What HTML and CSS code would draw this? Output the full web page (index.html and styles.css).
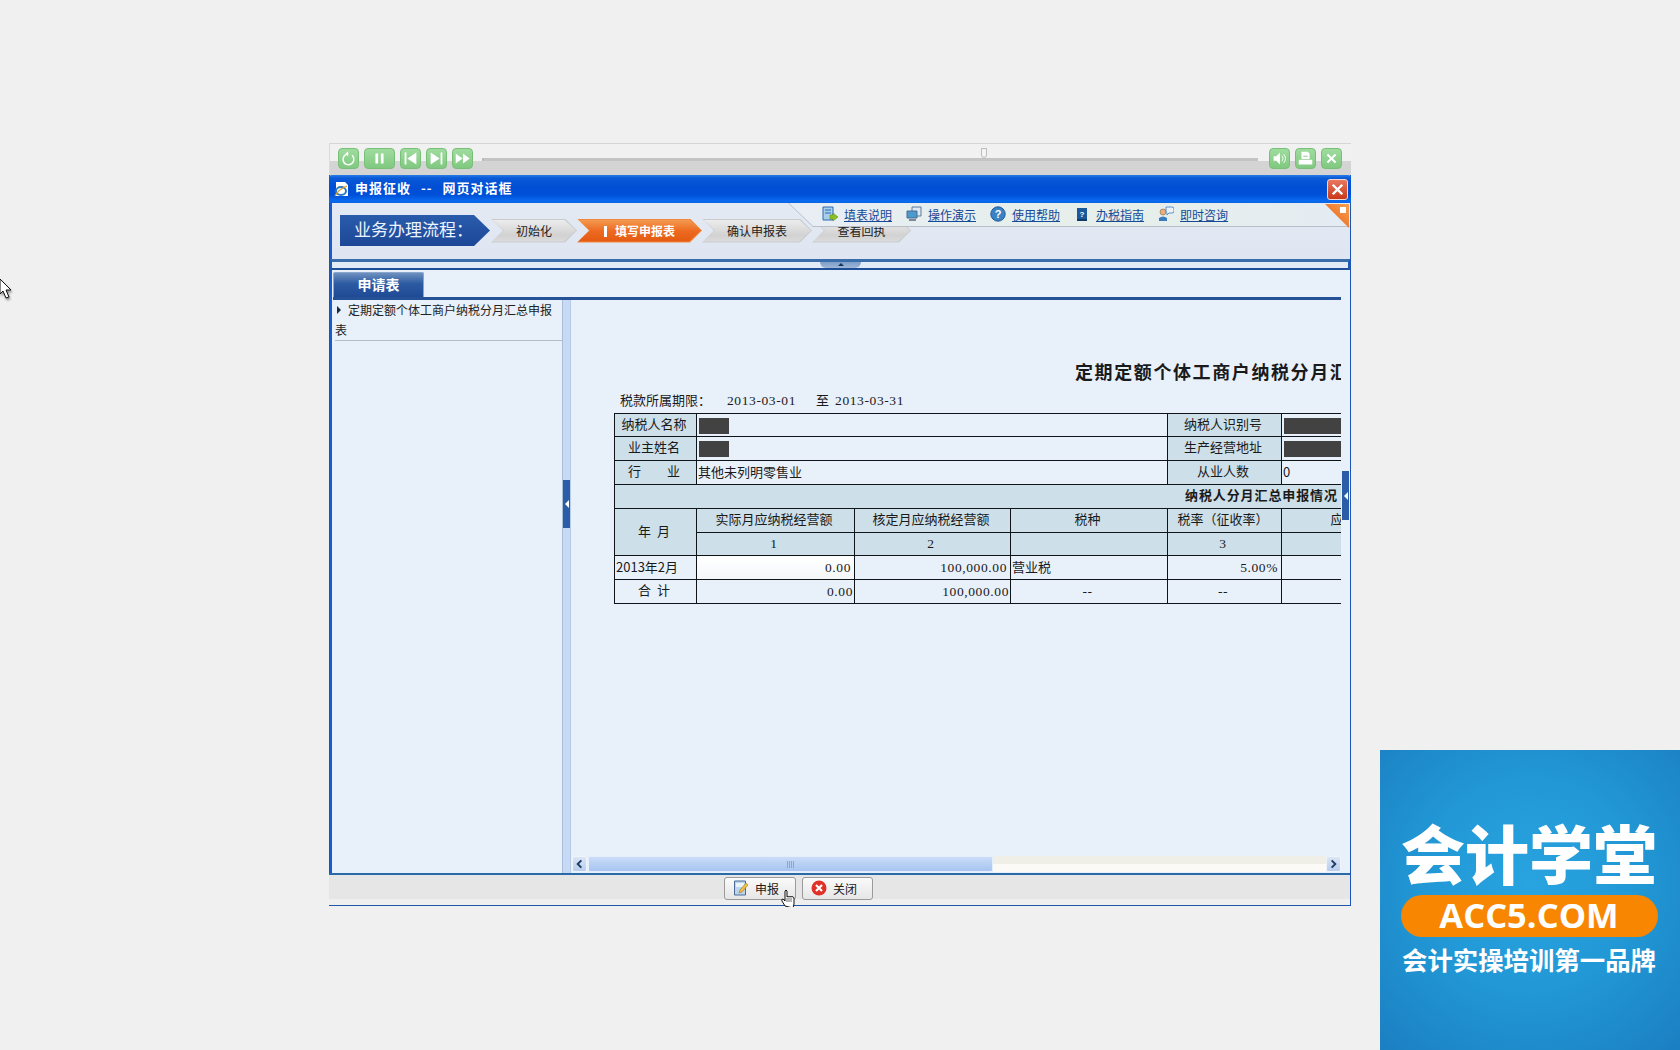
FILE: index.html
```html
<!DOCTYPE html>
<html lang="zh">
<head>
<meta charset="utf-8">
<title>申报征收</title>
<link rel="stylesheet" href="styles.css">
</head>
<body>
<div class="app">
  <div class="player">
    <div class="track-zone">
      <button class="pbtn"><svg viewBox="0 0 21 21"><path d="M14.5 7a6 6 0 1 1-4-1.6" fill="none" stroke="#fff" stroke-width="1.6"/><path d="M10 2.5v5.5l-3-2.7z" fill="#fff"/></svg></button>
      <button class="pbtn wide"><svg viewBox="0 0 31 21"><path d="M11 5h3v11h-3zM17 5h3v11h-3z" fill="#fff"/></svg></button>
      <button class="pbtn"><svg viewBox="0 0 21 21"><path d="M4 4h2v13H4zM17 4v13L7 10.500z" fill="#fff"/></svg></button>
      <button class="pbtn"><svg viewBox="0 0 21 21"><path d="M17 4h-2v13h2zM4 4v13l10-6.500z" fill="#fff"/></svg></button>
      <button class="pbtn"><svg viewBox="0 0 21 21"><path d="M3 5v11l7.500-5.500zM11 5v11l7.500-5.500z" fill="#fff"/></svg></button>
      <div class="slider"><span class="knob"></span></div>
      <button class="pbtn"><svg viewBox="0 0 21 21"><path d="M4 8h3l4-4v13l-4-4H4z" fill="#fff"/><path d="M13 7.500a4 4 0 0 1 0 6M15 5.500a7 7 0 0 1 0 10" fill="none" stroke="#fff"/></svg></button>
      <button class="pbtn"><svg viewBox="0 0 21 21"><path d="M6 3h7l2 2v6H6zM3 12h15v5H3z" fill="#fff"/><path d="M8 8h5" stroke="#88c888"/></svg></button>
      <button class="pbtn"><svg viewBox="0 0 21 21"><path d="M6 6l9 9M15 6l-9 9" stroke="#fff" stroke-width="2.200"/></svg></button>
    </div>
  </div>

  <div class="dialog">
    <div class="titlebar">
      <svg class="ie" viewBox="0 0 16 16"><path d="M2 1h9l3 3v11H2z" fill="#fff"/><ellipse cx="7" cy="10" rx="5" ry="4" fill="none" stroke="#2a78c8" stroke-width="2"/><path d="M1 15C3 11 8 7 13 5" fill="none" stroke="#d8a020" stroke-width="1.300"/></svg>
      <span class="title-text">申报征收 -- 网页对话框</span>
      <button class="closex"><svg viewBox="0 0 20 20"><path d="M5 5l10 10M15 5L5 15" stroke="#fff" stroke-width="2.600"/></svg></button>
    </div>

    <div class="head">
      <div class="steps">
        <div class="flow-label">业务办理流程：</div>
        <div class="step s1"><span>初始化</span></div>
        <div class="step s2 active"><span><i class="bar"></i>填写申报表</span></div>
        <div class="step s3"><span>确认申报表</span></div>
        <div class="step s4"><span>查看回执</span></div>
      </div>
      <div class="linkbar">
        <a class="link"><svg viewBox="0 0 16 16"><path d="M1 1h10v13H1z" fill="#a9cdea" stroke="#2a6cae"/><path d="M3 4h6M3 7h6" stroke="#2a6cae"/><path d="M8 9h3V7l5 4-5 4v-2H8z" fill="#8cc020" stroke="#5a8a10" stroke-width=".5"/></svg><span>填表说明</span></a>
        <a class="link"><svg viewBox="0 0 16 16"><path d="M6 1h9v9H6z" fill="#dfe8f0" stroke="#5a7a9a"/><path d="M1 5h10v7H1z" fill="#4a9ad0" stroke="#4a6a8a"/><path d="M3 14h7" stroke="#7a8a9a" stroke-width="2"/></svg><span>操作演示</span></a>
        <a class="link"><svg viewBox="0 0 16 16"><circle cx="8" cy="8" r="7.200" fill="#3a82c4" stroke="#1f5a9a"/><text x="8" y="12" class="qmark">?</text></svg><span>使用帮助</span></a>
        <a class="link"><svg viewBox="0 0 16 16"><path d="M3 2h10v12H3z" fill="#1a5a9a"/><path d="M3 13h10v2H3z" fill="#0e3a70"/><text x="8" y="11" class="qsmall">?</text></svg><span>办税指南</span></a>
        <a class="link"><svg viewBox="0 0 16 16"><circle cx="5" cy="6" r="3" fill="#e8b080" stroke="#8a6a40" stroke-width=".6"/><path d="M1 15v-3q4-3 8 0v3z" fill="#3a7ac0"/><path d="M8 1h6a2 2 0 0 1 2 2v2a2 2 0 0 1-2 2h-3l-2 2V7a3 3 0 0 1-1-2z" fill="#eaf2fa" stroke="#3a7ac0" stroke-width=".8"/></svg><span>即时咨询</span></a>
      </div>
      <div class="corner"><i></i></div>
    </div>

    <div class="hsplit"><div class="handle"><i></i></div></div>

    <div class="body">
      <div class="work">
        <div class="tabs"><div class="tab">申请表</div></div>
        <div class="panes">
          <div class="side">
            <div class="side-item"><i class="tri"></i>定期定额个体工商户纳税分月汇总申报表</div>
          </div>
          <div class="vsplit"><div class="collapse"><i></i></div></div>
          <div class="main">
            <div class="viewport">
              <h1 class="doc-title">定期定额个体工商户纳税分月汇总申报表</h1>
              <div class="period">
                <span>税款所属期限：</span>
                <span class="num d1">2013-03-01</span>
                <span class="to">至</span>
                <span class="num d2">2013-03-31</span>
              </div>
              <table class="form">
                <colgroup><col class="c1"><col class="c2"><col class="c3"><col class="c4"><col class="c5"><col class="c6"></colgroup>
                <tr class="h23">
                  <td class="lb">纳税人名称</td><td colspan="3"><span class="mask m30"></span></td>
                  <td class="lb">纳税人识别号</td><td><span class="mask m60"></span></td>
                </tr>
                <tr>
                  <td class="lb">业主姓名</td><td colspan="3"><span class="mask m30"></span></td>
                  <td class="lb">生产经营地址</td><td><span class="mask m60"></span></td>
                </tr>
                <tr>
                  <td class="lb">行&emsp;&emsp;业</td><td colspan="3" class="l">其他未列明零售业</td>
                  <td class="lb">从业人数</td><td class="l">0</td>
                </tr>
                <tr><td colspan="6" class="lb sec">纳税人分月汇总申报情况</td></tr>
                <tr>
                  <td rowspan="2" class="lb">年&nbsp;&nbsp;月</td>
                  <td class="lb">实际月应纳税经营额</td><td class="lb">核定月应纳税经营额</td><td class="lb">税种</td><td class="lb">税率（征收率）</td><td class="lb">应</td>
                </tr>
                <tr class="h23">
                  <td class="lb num">1</td><td class="lb num">2</td><td class="lb"></td><td class="lb num">3</td><td class="lb"></td>
                </tr>
                <tr>
                  <td class="l">2013年2月</td><td class="r num input">0.00</td><td class="r num">100,000.00</td><td class="l">营业税</td><td class="r num">5.00%</td><td></td>
                </tr>
                <tr>
                  <td>合&nbsp;&nbsp;计</td><td class="r2 num">0.00</td><td class="r2 num">100,000.00</td><td class="num">--</td><td class="num">--</td><td></td>
                </tr>
              </table>
            </div>
            <div class="hscroll">
              <div class="sb-btn"><svg viewBox="0 0 14 14"><path d="M9 3L5 7l4 4" fill="none" stroke="#1a3a66" stroke-width="2"/></svg></div>
              <div class="sb-thumb"><i></i></div>
              <div class="sb-track"></div>
              <div class="sb-btn"><svg viewBox="0 0 14 14"><path d="M5 3l4 4-4 4" fill="none" stroke="#1a3a66" stroke-width="2"/></svg></div>
            </div>
          </div>
        </div>
      </div>
      <div class="rstrip"><div class="rcollapse"><i></i></div></div>
    </div>

    <div class="foot">
      <button class="fbtn"><svg viewBox="0 0 16 16"><path d="M1.500 1h11v14h-11z" fill="#bcd4ee" stroke="#4a6a9a"/><path d="M3 3h8v4H3z" fill="#eaf2fa"/><path d="M6 13l1-3 6-7 2 2-6 7z" fill="#f0c040" stroke="#a07820" stroke-width=".6"/></svg><span>申报</span></button>
      <button class="fbtn"><svg viewBox="0 0 16 16"><circle cx="8" cy="8" r="7.500" fill="#e03028"/><path d="M5 5l6 6M11 5l-6 6" stroke="#fff" stroke-width="2.200"/></svg><span>关闭</span></button>
    </div>
  </div>
</div>

<svg class="cur-arrow" viewBox="0 0 14 24"><path d="M0 1l11 11H6l3 7-3 1-3-7-3 3z" fill="#fff" stroke="#111"/></svg>
<svg class="cur-hand" viewBox="0 0 16 18"><path d="M5 17l-3-5q-1-2 1-2l2 2V2q1-2 2 0v6q1-1 2 0 1-1 2 0 1-1 2 0 1 0 1 2v5l-1 4z" fill="#fff" stroke="#111"/><path d="M7 9v4M9 9v4M11 9v4" stroke="#111" stroke-width=".6"/></svg>

<aside class="logo">
  <div class="logo-name">会计学堂</div>
  <div class="logo-pill">ACC5.COM</div>
  <div class="logo-tag">会计实操培训第一品牌</div>
</aside>
</body>
</html>
```

FILE: styles.css
```css
* { box-sizing: border-box; }
html, body { height: 100%; }
body {
  margin: 0;
  padding: 143px 0 0 329px;
  background: #f0f0f0;
  overflow: hidden;
  font-family: "Noto Sans CJK SC", "Liberation Sans", sans-serif;
  font-size: 13px;
  color: #1a1a1a;
}
button { padding: 0; font: inherit; cursor: pointer; }
.app { width: 1022px; }

/* media player bar */
.player {
  height: 32px;
  background: linear-gradient(#f1f1f1 0, #f1f1f1 17px, #d4d4d4 17px, #d4d4d4 100%);
  border-top: 1px solid #d6d6d6;
  border-left: 1px solid #dcdcdc;
}
.track-zone { display: flex; align-items: flex-start; padding: 4px 9px 0 8px; gap: 5px; }
.pbtn {
  width: 21px; height: 21px; flex: none;
  border: 1px solid #78c078; border-radius: 4px;
  background: linear-gradient(#9fdc9f, #80c880);
  display: block;
}
.pbtn svg { display: block; width: 100%; height: 100%; }
.pbtn.wide { width: 31px; }
.slider { flex: 1; height: 3px; margin: 10px 6px 0 4px; background: #c4c4c4; position: relative; border-left: 2px solid #bbb; }
.knob { position: absolute; left: 497px; top: -10px; width: 6px; height: 10px; background: #f4f4f4; border: 1px solid #bbb; border-radius: 0 0 3px 3px; }

/* dialog */
.dialog {
  height: 731px;
  display: flex; flex-direction: column;
  border-left: 1px solid #1a54b8;
  border-right: 1px solid #1a54b8;
  border-bottom: 1px solid #1f56a8;
  background: #e8f0fa;
}
.titlebar {
  height: 28px; flex: none;
  margin: 0 -1px;
  display: flex; align-items: center;
  padding: 0 3px 0 5px;
  background: linear-gradient(#2a7ce8 0, #0a5ad8 3px, #004ed4 12px, #0050d8 20px, #0a6cf0 26px, #0a62e0 100%);
  border-radius: 3px 3px 0 0;
}
.ie { width: 16px; height: 16px; flex: none; }
.title-text { margin-left: 5px; margin-top: -3px; color: #fff; font-weight: 700; font-size: 13px; letter-spacing: 1px; flex: 1; white-space: pre; word-spacing: 6px; }
.closex { width: 21px; height: 21px; flex: none; border: 1px solid #f4d8d0; border-radius: 3px; background: linear-gradient(#e87860, #c83818); }
.closex svg { display: block; width: 100%; height: 100%; }

.head {
  height: 56px; flex: none; position: relative;
  background: linear-gradient(#e3eaf3, #dfe6f2);
  border-left: 2px solid #1a5cd0;
}
.steps { display: flex; align-items: center; padding: 12px 0 0 8px; height: 43px; }
.flow-label {
  width: 150px; height: 31px; flex: none;
  clip-path: polygon(0 0, 134px 0, 100% 50%, 134px 100%, 0 100%);
  background: linear-gradient(#2a5cac, #1c4796);
  color: #eef4ff; font-size: 17px; line-height: 28px; padding-left: 14px;
  white-space: nowrap; margin-right: 1px;
}
.step {
  height: 24px; flex: none; position: relative;
  display: flex; align-items: center; justify-content: center;
  clip-path: polygon(0 0, calc(100% - 12px) 0, 100% 50%, calc(100% - 12px) 100%, 0 100%, 12px 50%);
  background: #c9cbce;
  font-size: 12px; color: #222;
}
.step::before {
  content: ""; position: absolute; inset: 1px 1px;
  clip-path: polygon(0 0, calc(100% - 12px) 0, 100% 50%, calc(100% - 12px) 100%, 0 100%, 12px 50%);
  background: linear-gradient(#ececec, #d2d2d2 70%, #dcdcdc);
}
.step span { position: relative; margin-top: -1px; }
.s1 { width: 86px; }
.s2 { width: 125px; }
.s3 { width: 110px; }
.s4 { width: 99px; }
.step.active { background: #f08840; color: #fff; font-weight: 700; }
.step.active::before { background: linear-gradient(#f49a50, #ec6a20 50%, #e45a10); }
.bar { display: inline-block; width: 3px; height: 11px; background: #fff; margin-right: 8px; vertical-align: -1px; }

.linkbar {
  position: absolute; left: 456px; right: 0; top: 0; height: 24px;
  background: #b9bec8;
  clip-path: polygon(0 0, 100% 0, 100% 100%, 25px 100%);
  display: flex; align-items: center; gap: 14px; padding-left: 34px; padding-bottom: 2px;
}
.linkbar::before {
  content: ""; position: absolute; left: 1px; right: 0; top: 0; bottom: 1px;
  clip-path: polygon(0 0, 100% 0, 100% 100%, 24px 100%);
  background: linear-gradient(90deg, #e8eef4, #e6efe9 60%, #e4ecf4);
}
.link { position: relative; display: flex; align-items: center; gap: 6px; color: #174a96; font-size: 12px; text-decoration: underline; }
.link svg { width: 16px; height: 16px; flex: none; }
.qmark { font: 700 11px "Liberation Sans", sans-serif; fill: #fff; text-anchor: middle; }
.qsmall { font: 700 8px "Liberation Sans", sans-serif; fill: #fff; text-anchor: middle; }
.corner {
  position: absolute; right: 1px; top: 1px; width: 24px; height: 24px;
  background: linear-gradient(45deg, #e85a10, #f8a050);
  clip-path: polygon(0 0, 100% 0, 100% 100%);
}
.corner i { position: absolute; right: 3px; top: 3px; width: 6px; height: 6px; background: #fff; }

.hsplit {
  height: 11px; flex: none; position: relative;
  background: #e3ebf6;
  border-top: 3px solid #3a6eaa;
  border-bottom: 2px solid #1f4f96;
  border-left: 2px solid #1f5cb0;
  border-right: 2px solid #1f5cb0;
}
.handle {
  position: absolute; left: 488px; top: 0; width: 41px; height: 6px;
  background: linear-gradient(#7f9ec8, #9fb6d8);
  border-radius: 0 0 6px 6px;
  display: flex; justify-content: center;
}
.handle i { width: 0; height: 0; margin-top: 1px; border: 3px solid transparent; border-top: 0; border-bottom: 3px solid #14335f; }

.body { flex: 1; min-height: 0; display: flex; border-left: 2px solid #1a5cd0; }
.work { width: 1009px; flex: none; display: flex; flex-direction: column; min-height: 0; padding-top: 2px; }
.tabs { height: 28px; flex: none; border-bottom: 3px solid #255296; margin-left: 1px; }
.tab {
  width: 91px; height: 25px;
  background: linear-gradient(#6d90bf, #2c5aa2 45%, #1f4a96);
  border: 1px solid #8aa6cc; border-bottom: 0; border-radius: 2px 2px 0 0;
  color: #fff; font-weight: 700; font-size: 14px; line-height: 22px; text-align: center;
}
.panes { flex: 1; min-height: 0; display: flex; }
.side { width: 230px; flex: none; padding-left: 3px; }
.side-item {
  font-size: 12px; line-height: 20px; color: #222;
  padding: 0 2px 2px 0; height: 41px;
  border-bottom: 1px solid #b4bcc8;
}
.tri { display: inline-block; width: 0; height: 0; margin: 0 7px 1px 2px; border: 4px solid transparent; border-left: 4px solid #1a2a40; border-right: 0; }
.vsplit { width: 9px; flex: none; position: relative; background: #c6daf6; border-left: 1px solid #a9bcd8; border-right: 1px solid #b6cbe8; }
.collapse { position: absolute; left: 0; top: 180px; width: 7px; height: 48px; background: #2a5ca8; display: flex; align-items: center; justify-content: center; }
.collapse i, .rcollapse i { width: 0; height: 0; border: 4px solid transparent; border-right: 4px solid #fff; border-left: 0; }
.main { flex: 1; min-width: 0; display: flex; flex-direction: column; }
.viewport { flex: 1; min-height: 0; overflow: hidden; padding: 59px 0 0 43px; }
.doc-title {
  margin: 0 0 0 461px; height: 24px; font-size: 18px; line-height: 24px; font-weight: 700;
  letter-spacing: 1.6px; white-space: nowrap; color: #1a1a1a;
}
.period { display: flex; align-items: center; height: 20px; margin: 8px 0 2px 6px; white-space: nowrap; }
.period > span:first-child, .to { margin-top: -3px; }
.num { font-family: "Liberation Serif", "Noto Sans CJK SC", serif; font-size: 13.500px; letter-spacing: .6px; }
.d1 { margin-left: 16px; }
.to { margin-left: 20px; }
.d2 { margin-left: 6px; }
.form { width: 781px; table-layout: fixed; border-collapse: collapse; margin: 0; }
.c1 { width: 82px; } .c2 { width: 158px; } .c3 { width: 156px; } .c4 { width: 157px; } .c5 { width: 114px; } .c6 { width: 114px; }
.form tr { height: 24px; }
.form tr.h23 { height: 23px; }
.form td { border: 1px solid #101418; padding: 0 3px 3px 0; text-align: center; font-size: 13px; line-height: 16px; white-space: nowrap; overflow: hidden; }
.form td.num { font-size: 13.500px; padding-bottom: 0; }
.form td.l { text-align: left; padding: 0 0 2px 1px; }
.form td.r { text-align: right; padding: 0 3px 0 0; }
.form td.r2 { text-align: right; padding: 0 1px 0 0; }
.form td.sec { text-align: left; padding: 0 0 3px 570px; font-weight: 700; letter-spacing: .9px; }
.form .lb { background: #cddfe9; }
.form .input { background: linear-gradient(#fff, #f4f6f8); }
.mask { display: block; height: 16px; background: #424242; margin: 2px 0 -2px 2px; }
.m30 { width: 30px; }
.m60 { width: 60px; }

.hscroll { height: 17px; flex: none; display: flex; padding: 0 0 1px 1px; background: #e8f0fa; }
.sb-btn { width: 15px; flex: none; background: linear-gradient(#dbe6f6, #b8cdec); border: 1px solid #eef4fc; border-radius: 2px; }
.sb-btn svg { display: block; width: 100%; height: 100%; }
.sb-thumb { width: 405px; flex: none; margin-left: 1px; background: linear-gradient(#cadcf8, #a8c4f0); border: 1px solid #e4edfa; border-radius: 2px; display: flex; align-items: center; justify-content: center; }
.sb-thumb i { width: 8px; height: 7px; background: repeating-linear-gradient(90deg, #8aa6d0 0 1px, transparent 1px 2px); }
.sb-track { flex: 1; background: linear-gradient(#efefe7 50%, #fbfaf6 50%); }

.rstrip { flex: 1; position: relative; }
.rcollapse { position: absolute; left: 1px; top: 201px; width: 7px; height: 49px; background: #2a5ca8; display: flex; align-items: center; justify-content: center; }

.foot {
  height: 32px; flex: none;
  border-top: 2px solid #2a6aa8;
  margin-left: -1px;
  background: linear-gradient(#e6e6e6 0, #e6e6e6 24px, #efefef 24px);
  display: flex; justify-content: center; gap: 6px; padding: 2px 82px 0 0;
}
.fbtn {
  width: 72px; height: 23px; flex: none;
  display: flex; align-items: center; gap: 6px; padding: 0 0 1px 8px;
  font-size: 12px; color: #1a1a1a;
  border: 1px solid #9a9a9a; border-radius: 3px;
  background: linear-gradient(#fafafa, #e6e6e6);
}
.fbtn + .fbtn { width: 71px; }
.fbtn svg { width: 16px; height: 16px; flex: none; }

/* cursors lie over the page */
.cur-arrow { position: absolute; left: 0; top: 278px; width: 14px; height: 24px; filter: drop-shadow(1px 2px 1px rgba(0,0,0,.4)); }
.cur-hand { position: absolute; left: 780px; top: 889px; width: 16px; height: 18px; }

/* logo watermark */
.logo {
  position: absolute; right: 0; bottom: 0; width: 300px; height: 300px;
  background: radial-gradient(circle at 50% 45%, #28a4e0 0, #2299d6 45%, #1b7fc2 100%);
  display: flex; flex-direction: column; align-items: center; padding: 62px 2px 0 0;
  color: #fff;
}
.logo-name { font-size: 64px; line-height: 78px; font-weight: 900; white-space: nowrap; }
.logo-pill {
  width: 257px; height: 42px; margin-top: 5px; border-radius: 21px;
  background: #f98600; text-align: center;
  font: 700 34.500px/40px "Open Sans", sans-serif;
}
.logo-tag { margin-top: 4px; font-size: 25.400px; line-height: 36px; font-weight: 700; white-space: nowrap; }
```
